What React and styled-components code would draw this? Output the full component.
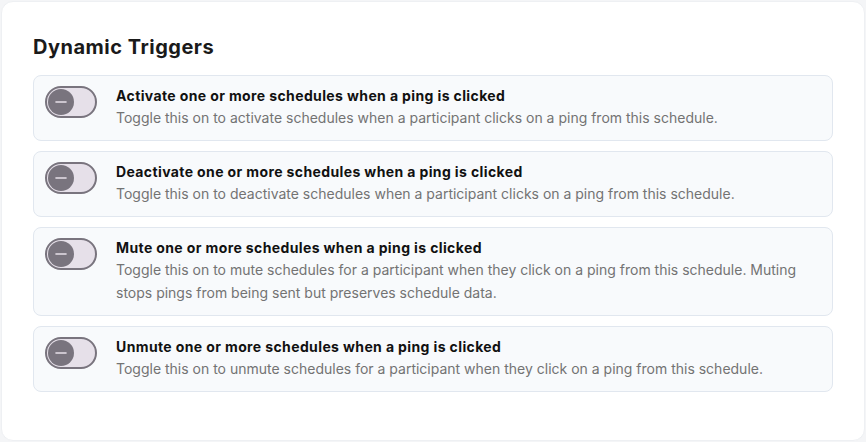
import { useState } from "react";
import styled, { createGlobalStyle } from "styled-components";

const GlobalStyle = createGlobalStyle`
  * { box-sizing: border-box; }
  body {
    margin: 0;
    background: #f4f5f7;
    font-family: Inter, Roboto, "Liberation Sans", Arial, sans-serif;
  }
`;

const triggers = [
  {
    id: "activate",
    title: "Activate one or more schedules when a ping is clicked",
    text: "Toggle this on to activate schedules when a participant clicks on a ping from this schedule.",
  },
  {
    id: "deactivate",
    title: "Deactivate one or more schedules when a ping is clicked",
    text: "Toggle this on to deactivate schedules when a participant clicks on a ping from this schedule.",
  },
  {
    id: "mute",
    title: "Mute one or more schedules when a ping is clicked",
    text: "Toggle this on to mute schedules for a participant when they click on a ping from this schedule. Muting stops pings from being sent but preserves schedule data.",
  },
  {
    id: "unmute",
    title: "Unmute one or more schedules when a ping is clicked",
    text: "Toggle this on to unmute schedules for a participant when they click on a ping from this schedule.",
  },
];

const Switch = ({ checked, onChange }) => (
  <Track $on={checked} onClick={() => onChange(!checked)} role="switch" aria-checked={checked}>
    <Thumb $on={checked}>
      <svg width="14" height="14" viewBox="0 0 14 14">
        <line x1="2" y1="7" x2="12" y2="7" stroke="currentColor" strokeWidth="1.6" strokeLinecap="round" />
      </svg>
    </Thumb>
  </Track>
);

const App = () => {
  const [state, setState] = useState({});

  return (
    <>
      <GlobalStyle />
      <Card>
        <Heading>Dynamic Triggers</Heading>
        <List>
          {triggers.map((t) => (
            <Row key={t.id}>
              <Switch
                checked={!!state[t.id]}
                onChange={(v) => setState({ ...state, [t.id]: v })}
              />
              <Copy>
                <RowTitle>{t.title}</RowTitle>
                <RowText>{t.text}</RowText>
              </Copy>
            </Row>
          ))}
        </List>
      </Card>
    </>
  );
};

const Card = styled.div`
  margin: 1px;
  min-height: 440px;
  background: #ffffff;
  border: 1px solid #eef0f3;
  border-radius: 12px;
  padding: 31px 31px 40px;
`;
const Heading = styled.h2`
  margin: 0 0 14px;
  font-size: 20px;
  line-height: 28px;
  font-weight: 700;
  letter-spacing: 0.5px;
  color: #1a1a1a;
`;
const List = styled.div`
  display: flex;
  flex-direction: column;
  gap: 10px;
`;
const Row = styled.div`
  display: flex;
  align-items: flex-start;
  gap: 19px;
  padding: 10px 11px 11px;
  background: #f8fafc;
  border: 1px solid #e1e7ef;
  border-radius: 8px;
`;
const Track = styled.div`
  flex: none;
  width: 52px;
  height: 32px;
  border-radius: 16px;
  border: 2px solid ${(p) => (p.$on ? "#6750a4" : "#79747e")};
  background: ${(p) => (p.$on ? "#6750a4" : "#e6e0e9")};
  display: flex;
  align-items: center;
  padding: 0 1px;
  cursor: pointer;
`;
const Thumb = styled.div`
  width: 26px;
  height: 26px;
  border-radius: 50%;
  background: ${(p) => (p.$on ? "#ffffff" : "#79747e")};
  color: ${(p) => (p.$on ? "#6750a4" : "#e6e0e9")};
  display: flex;
  align-items: center;
  justify-content: center;
  transform: translateX(${(p) => (p.$on ? "20px" : "0")});
  transition: transform 0.2s ease;
`;
const Copy = styled.div`
  display: flex;
  flex-direction: column;
`;
const RowTitle = styled.div`
  font-size: 14px;
  line-height: 20px;
  font-weight: 700;
  letter-spacing: 0.38px;
  color: #111111;
`;
const RowText = styled.div`
  font-size: 14px;
  line-height: 23px;
  color: #737373;
`;

export default App;
